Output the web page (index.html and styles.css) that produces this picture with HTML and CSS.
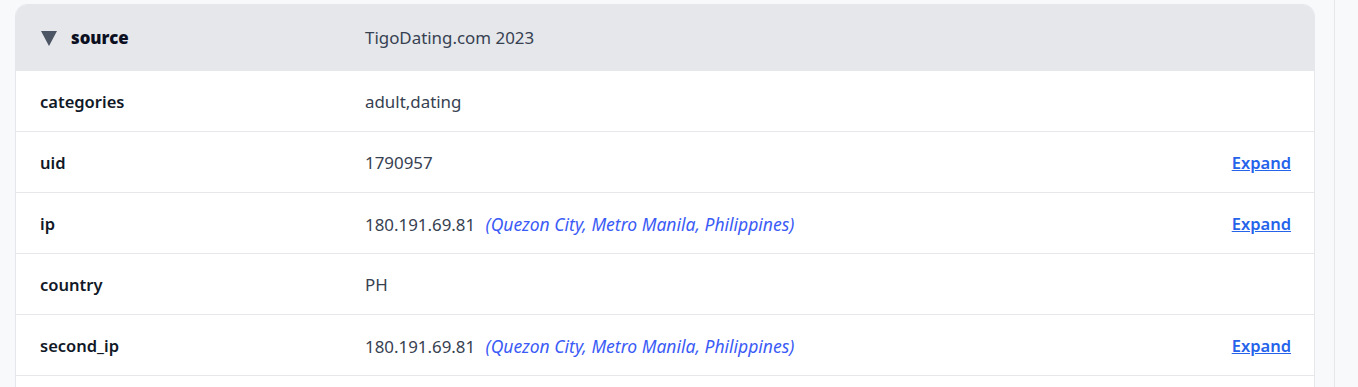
FILE: index.html
```html
<!DOCTYPE html>
<html>
<head>
<meta charset="utf-8">
<link rel="stylesheet" href="styles.css">
</head>
<body>
<div class="layout">
  <main class="main">
    <div class="card">
      <div class="row head">
        <div class="key">
          <svg class="caret" width="16" height="15" viewBox="0 0 16 15"><polygon points="0,0 16,0 8,15" fill="#4b5563"/></svg>
          <span class="src">source</span>
        </div>
        <div class="val">TigoDating.com 2023</div>
      </div>
      <div class="row">
        <div class="key">categories</div>
        <div class="val">adult,dating</div>
      </div>
      <div class="row">
        <div class="key">uid</div>
        <div class="val">1790957</div>
        <a class="expand" href="#">Expand</a>
      </div>
      <div class="row">
        <div class="key">ip</div>
        <div class="val">180.191.69.81 <span class="loc">(Quezon City, Metro Manila, Philippines)</span></div>
        <a class="expand" href="#">Expand</a>
      </div>
      <div class="row">
        <div class="key">country</div>
        <div class="val">PH</div>
      </div>
      <div class="row">
        <div class="key">second_ip</div>
        <div class="val">180.191.69.81 <span class="loc">(Quezon City, Metro Manila, Philippines)</span></div>
        <a class="expand" href="#">Expand</a>
      </div>
      <div class="row">
        <div class="key">&nbsp;</div>
        <div class="val"></div>
      </div>
    </div>
  </main>
  <aside class="side"></aside>
</div>
</body>
</html>
```
FILE: styles.css
```css
html, body {
  margin: 0;
  padding: 0;
  background: #f8f9fb;
  font-family: "Noto Sans", "Open Sans", sans-serif;
  font-size: 16.5px;
  overflow: hidden;
}
.layout {
  display: flex;
  height: 387px;
}
.main {
  width: 1334px;
  padding: 4px 19px 0 15px;
  box-sizing: border-box;
}
.side {
  flex: 1;
  border-left: 1px solid #e5e7eb;
  background: #f8f9fb;
}
.card {
  background: #fff;
  border: 1px solid #e5e7eb;
  border-radius: 12px;
  overflow: hidden;
}
.row {
  display: flex;
  align-items: center;
  height: 58px;
  padding: 2px 23px 0 24px;
  border-bottom: 1px solid #e5e7eb;
  line-height: 24px;
}
.row.head {
  height: 66px;
  padding-top: 0;
  background: #e5e7eb;
  border-bottom: none;
}
.key {
  width: 325px;
  flex: none;
  font-weight: 600;
  color: #111827;
  display: flex;
  align-items: center;
}
.caret {
  margin: 1px 14px 0 1px;
}
.src {
  font-weight: 900;
  font-size: 16.8px;
  color: #0b0f1f;
}
.val {
  flex: 1;
  color: #374151;
  font-size: 16.9px;
}
.loc {
  font-style: italic;
  color: #3b5bf6;
  margin-left: 6px;
  font-size: 17.5px;
}
.expand {
  color: #2563eb;
  font-weight: 600;
  text-decoration: underline;
}
```
